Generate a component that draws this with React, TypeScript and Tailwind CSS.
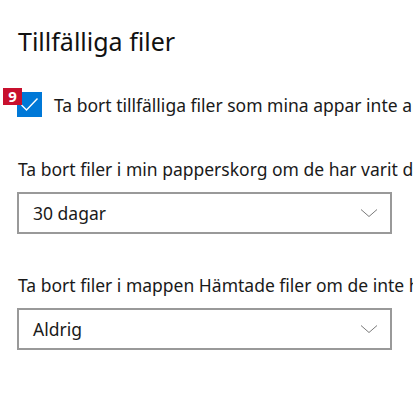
import React from "react";

function Chevron() {
  return (
    <svg width="18" height="10" viewBox="0 0 18 10" fill="none">
      <path d="M1 1.5 L9 8.5 L17 1.5" stroke="#7a7a7a" strokeWidth="1" />
    </svg>
  );
}

function Dropdown({ value }: { value: string }) {
  return (
    <div className="flex h-[42px] w-[375px] items-center justify-between border-2 border-[#999999] bg-white pl-[14px] pr-[12px]">
      <span className="text-[17.5px] leading-[22px] text-[#1a1a1a]">{value}</span>
      <Chevron />
    </div>
  );
}

export default function App() {
  return (
    <div
      className="relative flex h-[396px] w-[413px] flex-col overflow-hidden bg-white px-[17px]"
      style={{ fontFamily: '"Noto Sans", "Open Sans", sans-serif' }}
    >
      <h1 className="mt-[25px] whitespace-nowrap pl-[1px] text-[25px] leading-[32px] text-[#111111]">
        Tillfälliga filer
      </h1>
      <div className="mt-[35px] flex items-center gap-[12px] whitespace-nowrap">
        <div className="relative flex h-[25px] w-[25px] shrink-0 items-center justify-center bg-[#0078d7]">
          <svg width="19" height="15" viewBox="0 0 19 15" fill="none">
            <path d="M1.5 8 L6.5 13 L17.5 1.5" stroke="white" strokeWidth="1.4" />
          </svg>
          <div className="absolute left-[-14px] top-[-4px] flex h-[17px] w-[19px] items-center justify-center bg-[#c8102e] text-[15px] font-bold leading-none text-white">
            9
          </div>
        </div>
        <span className="text-[17.5px] leading-[22px] text-[#1a1a1a]">
          Ta bort tillfälliga filer som mina appar inte använder
        </span>
      </div>
      <p className="mt-[41px] whitespace-nowrap pl-[1px] text-[17.5px] leading-[22px] text-[#1a1a1a]">
        Ta bort filer i min papperskorg om de har varit där i mer än
      </p>
      <div className="mt-[12px]">
        <Dropdown value="30 dagar" />
      </div>
      <p className="mt-[40px] whitespace-nowrap pl-[1px] text-[17.5px] leading-[22px] text-[#1a1a1a]">
        Ta bort filer i mappen Hämtade filer om de inte har öppnats på mer än
      </p>
      <div className="mt-[12px]">
        <Dropdown value="Aldrig" />
      </div>
    </div>
  );
}
